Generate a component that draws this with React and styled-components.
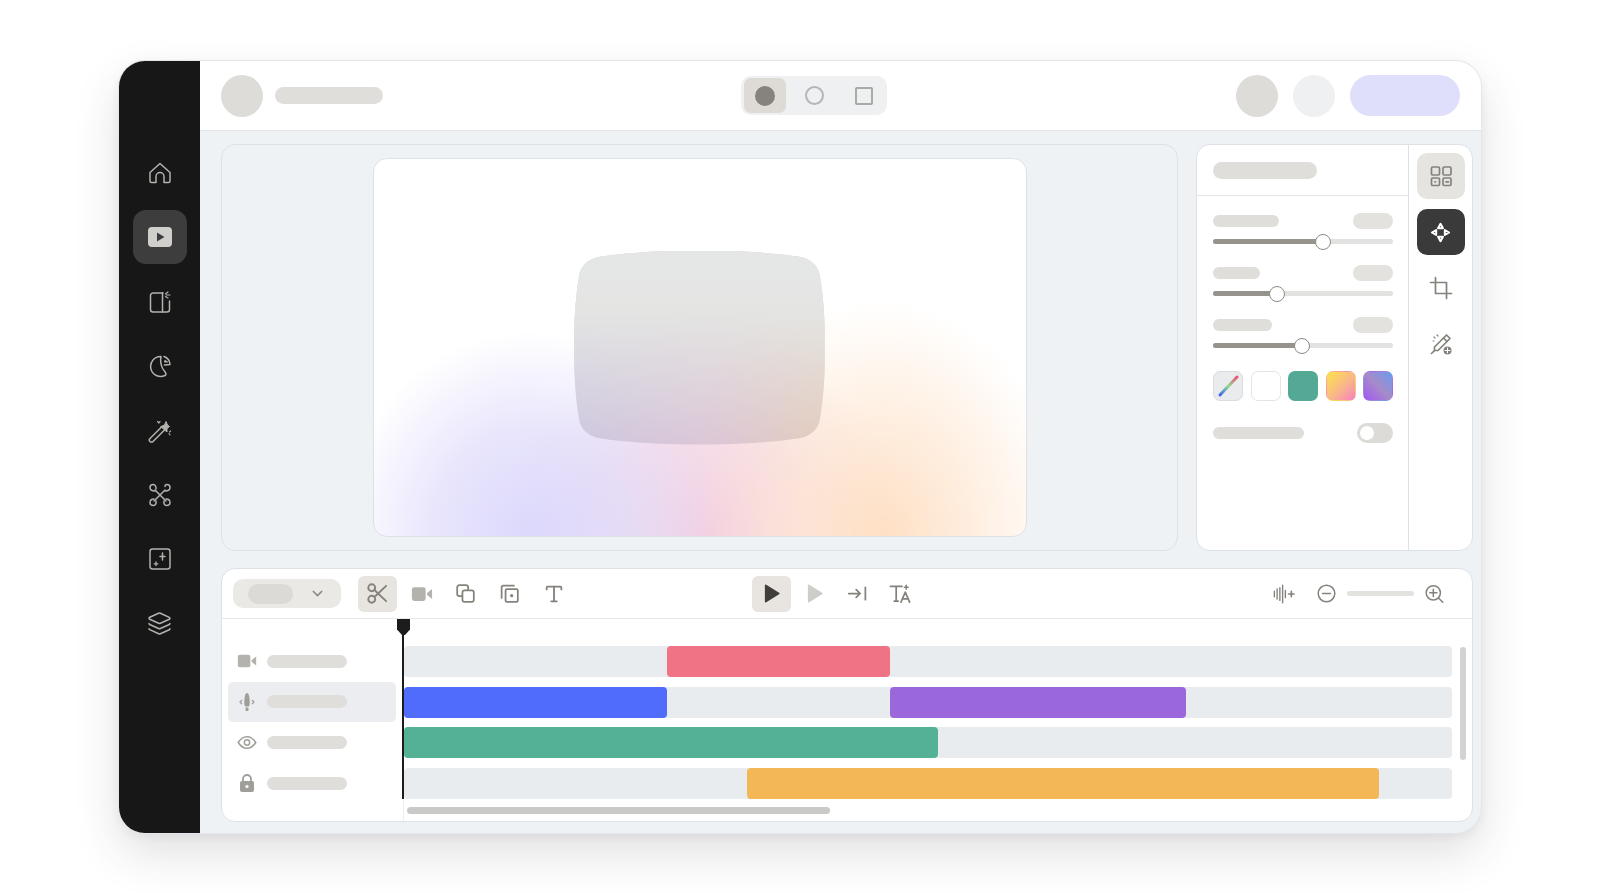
import React from 'react'
import styled, { createGlobalStyle } from 'styled-components'
import { ChevronDown, Layers, Type } from 'lucide-react'

const GlobalStyle = createGlobalStyle`
  html, body {
    margin: 0;
    padding: 0;
    background: #ffffff;
    font-family: "Liberation Sans", Arial, sans-serif;
  }
  body {
    height: 893px;
    overflow: hidden;
  }
`

const Page = styled.div`
  padding: 61px 0 0 119px;
`

const Window = styled.div`
  display: flex;
  width: 1362px;
  height: 772px;
  border-radius: 26px;
  overflow: hidden;
  background: #eff2f5;
  box-shadow: 0 0 0 1px #e3e6ea, 0 20px 46px rgba(50, 50, 60, 0.15), 0 3px 10px rgba(50, 50, 60, 0.07);
`

const Sidebar = styled.nav`
  flex: 0 0 81px;
  display: flex;
  flex-direction: column;
  align-items: center;
  gap: 10.4px;
  padding-top: 85px;
  background: #171717;
`

const NavItem = styled.div`
  width: 54px;
  height: 54px;
  flex: none;
  display: flex;
  align-items: center;
  justify-content: center;
  border-radius: 13px;
  color: #b4b2ae;
  background: ${(p) => (p.$active ? '#3d3d3d' : 'transparent')};
`

const Content = styled.div`
  flex: 1;
  min-width: 0;
  display: flex;
  flex-direction: column;
`

const TopBar = styled.header`
  height: 70px;
  flex: none;
  box-sizing: border-box;
  display: grid;
  grid-template-columns: 520px auto 1fr;
  align-items: center;
  padding: 0 21px;
  background: #ffffff;
  border-bottom: 1px solid #e2e5e9;
`

const TopGroup = styled.div`
  display: flex;
  align-items: center;
  gap: ${(p) => p.$gap || 12}px;
  justify-content: ${(p) => (p.$end ? 'flex-end' : 'flex-start')};
`

const Circle = styled.div`
  width: 42px;
  height: 42px;
  border-radius: 50%;
  background: ${(p) => p.$color || '#dedcd8'};
`

const Bar = styled.div`
  flex: none;
  width: ${(p) => p.$w}px;
  height: ${(p) => p.$h || 12}px;
  border-radius: 99px;
  background: ${(p) => p.$color || '#e0deda'};
`

const CtaPill = styled.div`
  width: 110px;
  height: 41px;
  border-radius: 21px;
  background: #dfdffb;
`

const ShapeSwitch = styled.div`
  display: flex;
  align-items: center;
  gap: 7.5px;
  padding: 2px 2px 2px 3px;
  border-radius: 10px;
  background: #eef0f2;
`

const ShapeButton = styled.div`
  width: 42px;
  height: 35px;
  display: flex;
  align-items: center;
  justify-content: center;
  border-radius: 7px;
  background: ${(p) => (p.$active ? '#dedbd6' : 'transparent')};
`

const Dot = styled.span`
  width: ${(p) => (p.$filled ? 20 : 19)}px;
  height: ${(p) => (p.$filled ? 20 : 19)}px;
  border-radius: 50%;
  box-sizing: border-box;
  background: ${(p) => (p.$filled ? '#86837e' : 'transparent')};
  border: ${(p) => (p.$filled ? 'none' : '2px solid #b5b5b3')};
`

const SquareMark = styled.span`
  width: 18px;
  height: 18px;
  border-radius: 2px;
  box-sizing: border-box;
  border: 2px solid #aaa9a6;
`

const Workspace = styled.main`
  flex: 1;
  display: flex;
  flex-direction: column;
  gap: 17px;
  padding: 13px 8px 11px 21px;
  min-height: 0;
`

const UpperRow = styled.div`
  display: flex;
  gap: 18px;
  height: 407px;
  flex: none;
`

const Preview = styled.section`
  flex: 1;
  box-sizing: border-box;
  display: flex;
  justify-content: center;
  padding: 13px 0;
  border: 1px solid #dde1e6;
  border-radius: 14px;
  background: #eff2f5;
`

const Stage = styled.div`
  width: 654px;
  box-sizing: border-box;
  display: flex;
  align-items: center;
  justify-content: center;
  border: 1px solid #dde1e6;
  border-radius: 14px;
  overflow: hidden;
  background:
    radial-gradient(ellipse 185px 235px at 78% 100%, rgba(254, 224, 196, 1), rgba(254, 230, 208, 0.72) 45%, rgba(255, 245, 232, 0) 100%),
    radial-gradient(ellipse 190px 205px at 24% 100%, rgba(220, 216, 252, 1), rgba(224, 220, 251, 0.75) 50%, rgba(242, 240, 255, 0) 100%),
    radial-gradient(ellipse 210px 190px at 51% 100%, rgba(243, 206, 224, 1), rgba(243, 212, 226, 0.75) 55%, rgba(243, 212, 228, 0) 100%),
    #ffffff;
`

const Blob = styled.div`
  width: 251px;
  height: 194px;
  flex: none;
  clip-path: path('M125.5 0C90 0 55 2 27 6C14 8 6 16 5 26C1 50 0 75 0 97C0 120 1 145 5 168C6 178 14 186 27 188C55 192 90 194 125.5 194C161 194 196 192 224 188C237 186 245 178 246 168C250 145 251 120 251 97C251 75 250 50 246 26C245 16 237 8 224 6C196 2 161 0 125.5 0Z');
  background:
    linear-gradient(180deg, #e5e7e7 0%, #e4e5e3 30%, rgba(228, 228, 224, 0) 100%),
    linear-gradient(90deg, #cdc7e0 0%, #dcc6d6 55%, #e4cbbb 100%);
`

const Inspector = styled.aside`
  flex: 0 0 277px;
  box-sizing: border-box;
  display: flex;
  border: 1px solid #dde1e6;
  border-radius: 14px;
  background: #ffffff;
  overflow: hidden;
`

const InspectorBody = styled.div`
  flex: 1;
  min-width: 0;
  display: flex;
  flex-direction: column;
`

const InspectorHead = styled.div`
  height: 50px;
  flex: none;
  display: flex;
  align-items: center;
  padding: 0 16px;
  border-bottom: 1px solid #e4e7ea;
`

const Controls = styled.div`
  display: flex;
  flex-direction: column;
  padding: 17px 15px 0 16px;
`

const SliderGroup = styled.div`
  display: flex;
  flex-direction: column;
  gap: 10px;
  margin-bottom: 21px;
`

const SliderHead = styled.div`
  display: flex;
  align-items: center;
  justify-content: space-between;
`

const ValuePill = styled.div`
  width: 40px;
  height: 16px;
  border-radius: 8px;
  background: #e3e2de;
`

const SliderTrack = styled.div`
  position: relative;
  height: 5px;
  border-radius: 3px;
  background: #e2e2e0;
`

const SliderFill = styled.div`
  height: 100%;
  border-radius: 3px;
  background: #96928c;
`

const SliderThumb = styled.div`
  position: absolute;
  top: 50%;
  width: 16px;
  height: 16px;
  box-sizing: border-box;
  transform: translate(-50%, -50%);
  border-radius: 50%;
  background: #ffffff;
  border: 1.5px solid #8d8a84;
`

const Swatches = styled.div`
  display: flex;
  justify-content: space-between;
  margin-top: 2px;
`

const Swatch = styled.div`
  width: 30px;
  height: 30px;
  box-sizing: border-box;
  display: flex;
  border-radius: 7px;
  border: 1px solid ${(p) => p.$border || 'transparent'};
  background: ${(p) => p.$fill};
`

const ToggleRow = styled.div`
  display: flex;
  align-items: center;
  justify-content: space-between;
  margin-top: 22px;
`

const Toggle = styled.div`
  width: 36px;
  height: 20px;
  box-sizing: border-box;
  padding: 3px;
  border-radius: 10px;
  background: #dcdbd8;
`

const ToggleKnob = styled.div`
  width: 14px;
  height: 14px;
  border-radius: 50%;
  background: #ffffff;
`

const ToolRail = styled.div`
  flex: 0 0 63px;
  display: flex;
  flex-direction: column;
  align-items: center;
  gap: 10px;
  padding-top: 8px;
  border-left: 1px solid #dde1e6;
`

const RailButton = styled.div`
  width: 48px;
  height: 46px;
  display: flex;
  align-items: center;
  justify-content: center;
  border-radius: 10px;
  color: ${(p) => (p.$dark ? '#ffffff' : '#85827c')};
  background: ${(p) => (p.$dark ? '#3a3a3a' : p.$soft ? '#e6e4e0' : 'transparent')};
`

const Timeline = styled.section`
  flex: 1;
  min-height: 0;
  display: flex;
  flex-direction: column;
  border: 1px solid #dde1e6;
  border-radius: 14px;
  background: #ffffff;
  overflow: hidden;
`

const TimelineBar = styled.div`
  height: 49px;
  flex: none;
  display: grid;
  grid-template-columns: 519px auto 1fr;
  align-items: center;
  padding: 0 28px 0 11px;
  border-bottom: 1px solid #e6e8eb;
`

const BarGroup = styled.div`
  display: flex;
  align-items: center;
  justify-content: ${(p) => (p.$end ? 'flex-end' : 'flex-start')};
  gap: ${(p) => p.$gap || 0}px;
`

const Dropdown = styled.div`
  width: 108px;
  height: 29px;
  box-sizing: border-box;
  display: flex;
  align-items: center;
  justify-content: space-between;
  padding: 0 15px;
  margin-right: 12px;
  border-radius: 10px;
  background: #ebe9e5;
  color: #8e8b85;
`

const DropdownValue = styled.div`
  width: 45px;
  height: 20px;
  border-radius: 10px;
  background: #dcdad6;
`

const ToolButton = styled.div`
  width: ${(p) => p.$w || 39}px;
  height: 36px;
  flex: none;
  display: flex;
  align-items: center;
  justify-content: center;
  border-radius: 6px;
  color: #85827c;
  background: ${(p) => (p.$active ? '#e8e5e0' : 'transparent')};
`

const WaveButton = styled(ToolButton)`
  margin-right: 22px;
`

const ZoomTrack = styled.div`
  width: 67px;
  height: 5px;
  margin: 0 11px;
  border-radius: 3px;
  background: #e2e2de;
`

const TimelineBody = styled.div`
  position: relative;
  flex: 1;
  min-height: 0;
  display: flex;
`

const TrackLabels = styled.div`
  flex: 0 0 182px;
  display: flex;
  flex-direction: column;
  padding: 22px 7.5px 0 6px;
  box-sizing: border-box;
  border-right: 1px solid #eceef0;
`

const TrackLabel = styled.div`
  height: 40.6px;
  flex: none;
  display: flex;
  align-items: center;
  gap: 10px;
  padding-left: 9px;
  border-radius: 5px;
  background: ${(p) => (p.$active ? '#ebedf1' : 'transparent')};
`

const LabelIcon = styled.span`
  width: 20px;
  height: 20px;
  display: flex;
  align-items: center;
  justify-content: center;
`

const Tracks = styled.div`
  flex: 1;
  min-width: 0;
  display: flex;
  flex-direction: column;
  gap: 9.7px;
  padding-top: 27px;
`

const Track = styled.div`
  width: 1048px;
  height: 31px;
  flex: none;
  display: flex;
  border-radius: 4px;
  background: #e9ecee;
`

const Clip = styled.div`
  flex: none;
  height: 31px;
  border-radius: 4px;
  margin-left: ${(p) => p.$start}px;
  width: ${(p) => p.$w}px;
  background: ${(p) => p.$color};
`

const Playhead = styled.div`
  position: absolute;
  left: 180px;
  top: 0;
  width: 2px;
  height: 180px;
  background: #1c1c1c;
`

const PlayheadCap = styled.svg`
  position: absolute;
  left: -5.500px;
  top: 0;
`

const HScroll = styled.div`
  position: absolute;
  left: 185px;
  bottom: 7px;
  width: 423px;
  height: 7px;
  border-radius: 4px;
  background: #c9c9c8;
`

const VScroll = styled.div`
  position: absolute;
  right: 6px;
  top: 28px;
  width: 6px;
  height: 113px;
  border-radius: 3px;
  background: #d2d2d2;
`

const Svg = ({ size = 24, children, ...rest }) => (
  <svg
    width={size}
    height={size}
    viewBox="0 0 24 24"
    fill="none"
    stroke="currentColor"
    strokeWidth="1.5"
    strokeLinecap="round"
    strokeLinejoin="round"
    {...rest}
  >
    {children}
  </svg>
)

const HomeIcon = () => (
  <Svg>
    <path d="M2 11.500 12 2.500l10 9V20a1.500 1.500 0 0 1-1.500 1.500H16V15.500a4 4 0 0 0-8 0v6H3.500A1.500 1.500 0 0 1 2 20Z" />
  </Svg>
)

const PlayTileIcon = () => (
  <svg width="24" height="20" viewBox="0 0 24 20">
    <rect width="24" height="20" rx="4" fill="#d0cfcc" />
    <path d="M9 5.500 16.500 10 9 14.500Z" fill="#3d3d3d" />
  </svg>
)

const PanelIcon = () => (
  <Svg>
    <path d="M15 3H5a2.500 2.500 0 0 0-2.500 2.500v14A2.500 2.500 0 0 0 5 22h14a2.500 2.500 0 0 0 2.500-2.500V11" />
    <path d="M14.500 3v19" />
    <path d="m20 2-2.500 2M22 5h-3.500M20 8l-2.500-1.500" strokeWidth="1.200" />
  </Svg>
)

const PieIcon = () => (
  <Svg>
    <path d="M13 2.500A10 10 0 1 0 17 21.500C18.800 20.600 17.500 18 16 16.500 14 14.500 13.500 12 13 10c-.4-2.500-.5-5 0-7.500Z" />
    <path d="M16 2.500a9 9 0 0 1 6 8l-5.500.5" />
    <path d="M17 6.500 19.500 8h-3z" strokeWidth="1.100" />
  </Svg>
)

const WandIcon = () => (
  <Svg>
    <path d="M13.500 8 2 19.500a2 2 0 0 0 3 3L16.500 11" />
    <path d="M13 7.500 16.500 6 18 2.500l1.500 3.500 2 1.500-2.500 2V13l-3-2.500Z" fill="currentColor" strokeWidth="1" />
    <path d="M9.500 2.500 11 4M12 2.500 10.500 4M21 14.500l1 1.500M22.500 12l-1 1" strokeWidth="1.100" />
  </Svg>
)

const KnotIcon = () => (
  <Svg>
    <path d="M7 7l11 11M17 7 6 18" />
    <path d="M7 8C4 8 2 6.500 2 4.500S3.500 1.500 5 1.500 8.500 3 8 6M17 8c3 0 5-1.500 5-3.500S20.500 1.500 19 1.500c-1.500 0-2 1-2 2" />
    <path d="M6 16c-2.500 0-4 1.500-4 3.500S3.500 22.500 5.500 22.500 8.500 20.500 8 18M18 16c2.500 0 4 1.500 4 3.500S20.500 22.500 18.500 22.500 15.500 20.500 16 18" />
  </Svg>
)

const SparkSquareIcon = () => (
  <Svg>
    <rect x="2" y="2" width="20" height="20" rx="2.500" />
    <path d="M14.500 6v7M12 9.500h5" />
    <path d="M8 15v3.500M6.200 16.800h3.600" strokeWidth="1.300" />
  </Svg>
)

const GridIcon = () => (
  <Svg strokeWidth="1.700">
    <rect x="2.500" y="3" width="8" height="8" rx="1.200" />
    <rect x="14" y="3" width="8" height="8" rx="1.200" />
    <rect x="2.500" y="14" width="8" height="7.500" rx="1.200" />
    <rect x="14" y="14" width="8" height="7.500" rx="1.200" />
    <path d="M6 17.800h.5M17 17.800h2.500" />
  </Svg>
)

const MoveIcon = () => (
  <svg width="23" height="23" viewBox="0 0 24 24" fill="none" stroke="currentColor" strokeWidth="2.100" strokeLinejoin="round">
    <path d="M12 3 14.600 7.500H9.400Z" />
    <path d="M12 21 9.400 16.500h5.200Z" />
    <path d="M3 12 7.500 9.400v5.200Z" />
    <path d="M21 12 16.500 14.600V9.400Z" />
  </svg>
)

const CropIcon = () => (
  <Svg strokeWidth="1.700">
    <path d="M6.500 1.500V17.500H22.500" />
    <path d="M1.500 6.500H17.500V22.500" />
  </Svg>
)

const BrushIcon = () => (
  <Svg strokeWidth="1.700">
    <path d="M17.500 3 21 6.500 9 18.500H5.500V15Z" />
    <path d="M5.500 18.500 2.500 21.500M14.500 6 18 9.500" />
    <path d="M8 3l1 1M5 5l1 1M4 9h1" strokeWidth="1.200" />
    <circle cx="18.500" cy="18.500" r="4" fill="currentColor" stroke="none" />
    <path d="M16 18.500h5M18.500 16v5" stroke="#fff" strokeWidth="1" />
  </Svg>
)

const ScissorsIcon = () => (
  <Svg size={23} strokeWidth="2">
    <circle cx="6" cy="6" r="3.600" />
    <circle cx="6" cy="18" r="3.600" />
    <path d="M8.800 8.400 21 20M8.800 15.600 21 4" />
  </Svg>
)

const VideoIcon = ({ size = 22 }) => (
  <svg width={size} height={size} viewBox="0 0 24 24" fill="#b4b2ac">
    <rect x="1" y="4.500" width="15" height="15" rx="2.500" />
    <path d="M17.500 11 23 6.500v11L17.500 13Z" />
  </svg>
)

const CopyIcon = () => (
  <Svg size={21} strokeWidth="2">
    <path d="M8 15H5a2.500 2.500 0 0 1-2.500-2.500V5A2.500 2.500 0 0 1 5 2.500h7.500A2.500 2.500 0 0 1 15 5v3" />
    <rect x="8.500" y="8.500" width="13" height="13" rx="2.500" />
  </Svg>
)

const FrameIcon = () => (
  <Svg size={21} strokeWidth="2">
    <path d="M3 17V5a2 2 0 0 1 2-2h12" />
    <rect x="7.500" y="7" width="14" height="14.500" rx="1.500" />
    <circle cx="14.500" cy="14.500" r="1.800" fill="currentColor" stroke="none" />
  </Svg>
)

const PlayIcon = ({ color, size = 19 }) => (
  <svg width={size} height={size} viewBox="0 0 20 20" fill={color}>
    <path d="M3 1.500a1 1 0 0 1 1.500-.8l13.500 8.500a1 1 0 0 1 0 1.600L4.500 19.300A1 1 0 0 1 3 18.500Z" />
  </svg>
)

const JumpIcon = () => (
  <Svg size={21} strokeWidth="2">
    <path d="M2 12H15M10.500 7.500 15 12l-4.500 4.500M21 5v14" />
  </Svg>
)

const TextSparkIcon = () => (
  <Svg size={23} strokeWidth="1.800">
    <path d="M1.500 4.500h12M7.500 4.500V20M5.500 20h4" />
    <path d="m12.500 21 4.500-10.500L21.500 21M14.500 17.500h5" />
    <path d="M18 3.500v4M16 5.500h4" strokeWidth="1.600" />
  </Svg>
)

const WaveIcon = () => (
  <Svg size={24} strokeWidth="1.500">
    <path d="M1.500 9v6M4.500 6.500v11M7.500 5v14M10.500 2.500v19M13.500 8v8" />
    <path d="M17 12h6M20 9v6" strokeWidth="1.800" />
  </Svg>
)

const ZoomOutIcon = () => (
  <Svg size={19} strokeWidth="1.900">
    <circle cx="12" cy="12" r="10.500" />
    <path d="M7 12h10" />
  </Svg>
)

const ZoomInIcon = () => (
  <Svg size={20} strokeWidth="1.900">
    <circle cx="10.500" cy="10.500" r="9" />
    <path d="M6 10.500h9M10.500 6v9M17 17l5.500 5.500" />
  </Svg>
)

const MicIcon = () => (
  <svg width="20" height="20" viewBox="0 0 20 20" fill="#a09e99">
    <path d="M10 1c1.700 0 2.700 4 2.700 9 0 1.500 0 3.500-1 4.500H8.300c-1-1-1-3-1-4.500 0-5 1-9 2.700-9Z" />
    <rect x="8.500" y="15.500" width="3" height="3.500" rx="1" />
    <path d="M5 8 3 10l2 2M15 8l2 2-2 2" fill="none" stroke="#a09e99" strokeWidth="1.200" />
  </svg>
)

const EyeIcon = () => (
  <svg width="21" height="21" viewBox="0 0 24 24" fill="none" stroke="#a09e99" strokeWidth="1.800">
    <path d="M1.500 12C5 6.500 8.500 5 12 5s7 1.500 10.500 7C19 17.500 15.500 19 12 19s-7-1.500-10.500-7Z" />
    <circle cx="12" cy="12" r="3.200" />
  </svg>
)

const LockIcon = () => (
  <svg width="20" height="20" viewBox="0 0 20 20">
    <path d="M6 9V6a4 4 0 0 1 8 0v3" fill="none" stroke="#a09e99" strokeWidth="1.800" />
    <rect x="3" y="8" width="14" height="11" rx="2" fill="#a09e99" />
    <circle cx="10" cy="13.500" r="1.600" fill="#fff" />
  </svg>
)

const PenSwatch = () => (
  <svg width="28" height="28" viewBox="0 0 28 28">
    <defs>
      <linearGradient id="pen" x1="0" y1="1" x2="1" y2="0">
        <stop offset="0" stopColor="#3f68f2" />
        <stop offset="0.5" stopColor="#8fdc8e" />
        <stop offset="1" stopColor="#f24f78" />
      </linearGradient>
    </defs>
    <path d="M6 23 23 5" stroke="url(#pen)" strokeWidth="3" strokeLinecap="round" />
  </svg>
)

const navItems = [
  { id: 'home', icon: <HomeIcon /> },
  { id: 'video', icon: <PlayTileIcon />, active: true },
  { id: 'panel', icon: <PanelIcon /> },
  { id: 'pie', icon: <PieIcon /> },
  { id: 'wand', icon: <WandIcon /> },
  { id: 'knot', icon: <KnotIcon /> },
  { id: 'spark', icon: <SparkSquareIcon /> },
  { id: 'layers', icon: <Layers size={25} strokeWidth={1.5} /> },
]

const sliders = [
  { label: 66, value: 61 },
  { label: 47, value: 35.400 },
  { label: 59, value: 49.700 },
]

const trackLabels = [
  { id: 'video', icon: <VideoIcon size={20} /> },
  { id: 'audio', icon: <MicIcon />, active: true },
  { id: 'eye', icon: <EyeIcon /> },
  { id: 'lock', icon: <LockIcon /> },
]

const tracks = [
  [{ start: 263, w: 222.500, color: '#ef7285' }],
  [
    { start: 0, w: 263, color: '#4f6cfb' },
    { start: 222.500, w: 296, color: '#9a68db' },
  ],
  [{ start: 0, w: 534, color: '#54b195' }],
  [{ start: 343, w: 632, color: '#f4b755' }],
]

export default function App() {
  return (
    <>
      <GlobalStyle />
      <Page>
        <Window>
          <Sidebar>
            {navItems.map((item) => (
              <NavItem key={item.id} $active={item.active}>
                {item.icon}
              </NavItem>
            ))}
          </Sidebar>
          <Content>
            <TopBar>
              <TopGroup>
                <Circle />
                <Bar $w={108} $h={17} />
              </TopGroup>
              <ShapeSwitch>
                <ShapeButton $active>
                  <Dot $filled />
                </ShapeButton>
                <ShapeButton>
                  <Dot />
                </ShapeButton>
                <ShapeButton>
                  <SquareMark />
                </ShapeButton>
              </ShapeSwitch>
              <TopGroup $end $gap={15}>
                <Circle />
                <Circle $color="#eff0f2" />
                <CtaPill />
              </TopGroup>
            </TopBar>
            <Workspace>
              <UpperRow>
                <Preview>
                  <Stage>
                    <Blob />
                  </Stage>
                </Preview>
                <Inspector>
                  <InspectorBody>
                    <InspectorHead>
                      <Bar $w={104} $h={17} />
                    </InspectorHead>
                    <Controls>
                      {sliders.map((s) => (
                        <SliderGroup key={s.label}>
                          <SliderHead>
                            <Bar $w={s.label} />
                            <ValuePill />
                          </SliderHead>
                          <SliderTrack>
                            <SliderFill style={{ width: `${s.value}%` }} />
                            <SliderThumb style={{ left: `${s.value}%` }} />
                          </SliderTrack>
                        </SliderGroup>
                      ))}
                      <Swatches>
                        <Swatch $fill="#e9ebec" $border="#d9dbdc">
                          <PenSwatch />
                        </Swatch>
                        <Swatch $fill="#ffffff" $border="#e2e4e6" />
                        <Swatch $fill="#54a995" />
                        <Swatch $fill="linear-gradient(135deg, #fbd85a 15%, #f9b78a 55%, #f77fc0 100%)" />
                        <Swatch $fill="linear-gradient(45deg, #a25cf0 5%, #a68bc8 50%, #6b9bf0 100%)" />
                      </Swatches>
                      <ToggleRow>
                        <Bar $w={91} />
                        <Toggle>
                          <ToggleKnob />
                        </Toggle>
                      </ToggleRow>
                    </Controls>
                  </InspectorBody>
                  <ToolRail>
                    <RailButton $soft>
                      <GridIcon />
                    </RailButton>
                    <RailButton $dark>
                      <MoveIcon />
                    </RailButton>
                    <RailButton>
                      <CropIcon />
                    </RailButton>
                    <RailButton>
                      <BrushIcon />
                    </RailButton>
                  </ToolRail>
                </Inspector>
              </UpperRow>
              <Timeline>
                <TimelineBar>
                  <BarGroup $gap={5}>
                    <Dropdown>
                      <DropdownValue />
                      <ChevronDown size={17} />
                    </Dropdown>
                    <ToolButton $active>
                      <ScissorsIcon />
                    </ToolButton>
                    <ToolButton>
                      <VideoIcon />
                    </ToolButton>
                    <ToolButton>
                      <CopyIcon />
                    </ToolButton>
                    <ToolButton>
                      <FrameIcon />
                    </ToolButton>
                    <ToolButton>
                      <Type size={22} strokeWidth={2} />
                    </ToolButton>
                  </BarGroup>
                  <BarGroup $gap={4}>
                    <ToolButton $active>
                      <PlayIcon color="#3f3e3b" />
                    </ToolButton>
                    <ToolButton>
                      <PlayIcon color="#cfcdc9" />
                    </ToolButton>
                    <ToolButton>
                      <JumpIcon />
                    </ToolButton>
                    <ToolButton>
                      <TextSparkIcon />
                    </ToolButton>
                  </BarGroup>
                  <BarGroup $end>
                    <WaveButton $w={22}>
                      <WaveIcon />
                    </WaveButton>
                    <ToolButton $w={19}>
                      <ZoomOutIcon />
                    </ToolButton>
                    <ZoomTrack />
                    <ToolButton $w={19}>
                      <ZoomInIcon />
                    </ToolButton>
                  </BarGroup>
                </TimelineBar>
                <TimelineBody>
                  <TrackLabels>
                    {trackLabels.map((t) => (
                      <TrackLabel key={t.id} $active={t.active}>
                        <LabelIcon>{t.icon}</LabelIcon>
                        <Bar $w={80} $h={13} />
                      </TrackLabel>
                    ))}
                  </TrackLabels>
                  <Tracks>
                    {tracks.map((clips, i) => (
                      <Track key={i}>
                        {clips.map((c) => (
                          <Clip key={c.color} $start={c.start} $w={c.w} $color={c.color} />
                        ))}
                      </Track>
                    ))}
                  </Tracks>
                  <Playhead>
                    <PlayheadCap width="13" height="16" viewBox="0 0 13 16">
                      <path d="M0 0h13v10.500l-5 5.500H5l-5-5.500Z" fill="#1c1c1c" />
                    </PlayheadCap>
                  </Playhead>
                  <HScroll />
                  <VScroll />
                </TimelineBody>
              </Timeline>
            </Workspace>
          </Content>
        </Window>
      </Page>
    </>
  )
}
